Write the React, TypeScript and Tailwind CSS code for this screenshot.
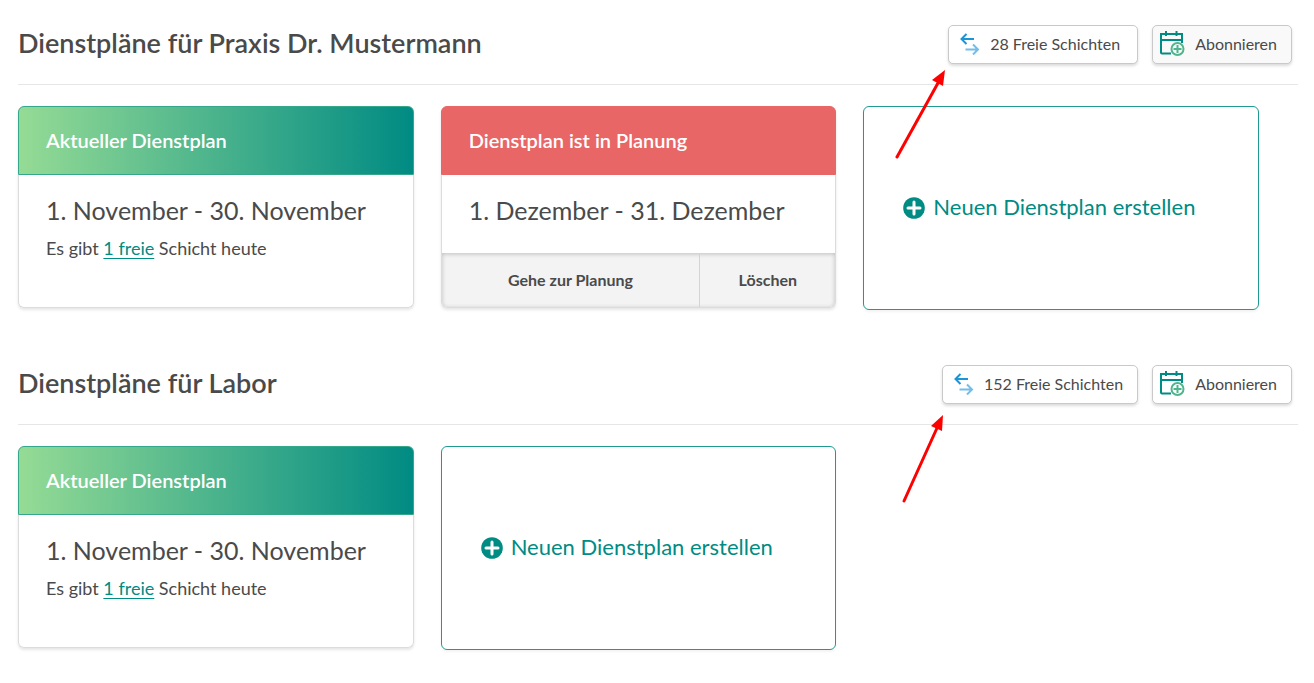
import type { ReactNode } from "react";
import { clsx } from "clsx";

type Point = [number, number];

type Pointer = {
  tail: Point;
  shaftEnd: Point;
  head: string;
};

const SwapIcon = () => (
  <svg width="20" height="22" viewBox="0 0 20 22" fill="none" strokeWidth="2" aria-hidden="true">
    <path d="M6.500 1 1.500 6l5 5M2 6h12" stroke="#1b94d8" />
    <path d="M13 11.500l5 5-5 5M18 16.500H5.500" stroke="#72bdea" />
  </svg>
);

const CalendarIcon = () => (
  <svg width="26" height="26" viewBox="0 0 26 26" fill="none" aria-hidden="true">
    <path d="M12 22.500H3a1 1 0 0 1-1-1V3h21v9M2 9h21M7 0v5M17.500 0v5" stroke="#008b83" strokeWidth="2" />
    <circle cx="18.500" cy="18" r="6" stroke="#4fb58d" strokeWidth="2" />
    <path d="M18.500 14v8M14.500 18h8" stroke="#4fb58d" strokeWidth="2" />
  </svg>
);

const PlusIcon = () => (
  <svg width="22" height="22" viewBox="0 0 22 22" aria-hidden="true">
    <circle cx="11" cy="11" r="10.800" fill="#008b83" />
    <path d="M11 5v12M5 11h12" stroke="#fff" strokeWidth="3" strokeLinecap="round" />
  </svg>
);

const PointerArrow = ({ tail, shaftEnd, head }: Pointer) => (
  <svg
    className="pointer-events-none absolute top-full -left-[60px] z-10"
    width="70"
    height="100"
    viewBox="0 0 70 100"
    aria-hidden="true"
  >
    <path
      d={`M${tail.join(" ")}L${shaftEnd.join(" ")}`}
      stroke="#ff0000"
      strokeWidth="3"
      strokeLinecap="round"
    />
    <polygon points={head} fill="#ff0000" />
  </svg>
);

const ToolbarButton = ({
  icon,
  children,
  className,
}: {
  icon: ReactNode;
  children: ReactNode;
  className?: string;
}) => (
  <button
    type="button"
    className={clsx(
      "flex h-[39px] items-center rounded-[5px] border border-[#c9c9c9] pb-px text-base text-[#4a4a4a] shadow-[0_2px_3px_rgba(0,0,0,0.14)]",
      className,
    )}
  >
    {icon}
    {children}
  </button>
);

const CurrentPlanCard = () => (
  <article className="flex min-h-[202px] flex-col rounded-[6px] shadow-[0_2px_3px_rgba(0,0,0,0.1)]">
    <h2 className="rounded-t-[6px] border border-[#35a88b] bg-linear-to-r/srgb from-[#95db95] to-[#008b83] px-[27px] pt-[19px] pb-5 text-xl leading-7 font-semibold text-white">
      Aktueller Dienstplan
    </h2>
    <div className="flex-1 rounded-b-[6px] border border-t-0 border-[#dcdcdc] px-[27px] pt-[17px]">
      <p className="text-[25px] leading-9">1. November - 30. November</p>
      <p className="mt-2 text-lg leading-6">
        Es gibt{" "}
        <a href="#freie-schichten" className="text-[#008b83] underline underline-offset-3">
          1 freie
        </a>{" "}
        Schicht heute
      </p>
    </div>
  </article>
);

const DraftPlanCard = () => (
  <article className="flex min-h-[202px] flex-col rounded-[6px] shadow-[0_2px_3px_rgba(0,0,0,0.1)]">
    <h2 className="rounded-t-[6px] border border-[#e86666] bg-[#e86666] px-[27px] pt-[19px] pb-5 text-xl leading-7 font-semibold text-white">
      Dienstplan ist in Planung
    </h2>
    <div className="flex flex-1 flex-col rounded-b-[6px] border border-t-0 border-[#dcdcdc]">
      <p className="flex-1 px-[27px] pt-[17px] text-[25px] leading-9">
        1. Dezember - 31. Dezember
      </p>
      <div className="flex h-[54px] rounded-b-[5px] bg-[#f3f3f3] text-base font-bold shadow-[inset_0_1px_4px_rgba(0,0,0,0.22)]">
        <button type="button" className="flex-1 border-r border-[#d4d4d4] pb-px">
          Gehe zur Planung
        </button>
        <button type="button" className="w-[135px] pb-px">
          Löschen
        </button>
      </div>
    </div>
  </article>
);

const NewPlanCard = () => (
  <button
    type="button"
    className="flex min-h-[204px] items-center gap-2 rounded-[6px] border border-[#1f9a92] px-[39px] text-left text-[22px] leading-7 text-[#008b83] shadow-[0_2px_3px_rgba(0,0,0,0.05)]"
  >
    <PlusIcon />
    <span className="pb-[3px]">Neuen Dienstplan erstellen</span>
  </button>
);

const PlanSection = ({
  title,
  openShifts,
  pointer,
  highlighted,
  children,
}: {
  title: string;
  openShifts: number;
  pointer: Pointer;
  highlighted?: boolean;
  children: ReactNode;
}) => (
  <section>
    <header className="flex items-start justify-between border-b border-[#e6e6e6] pr-[6px] pb-5">
      <h1 className="text-[27px] leading-9 font-semibold">{title}</h1>
      <div className="flex gap-[14px]">
        <div className="relative">
          <ToolbarButton
            icon={<SwapIcon />}
            className="min-w-[190px] gap-[10px] bg-white pr-[14px] pl-[11px]"
          >
            {openShifts} Freie Schichten
          </ToolbarButton>
          <PointerArrow {...pointer} />
        </div>
        <ToolbarButton
          icon={<CalendarIcon />}
          className={clsx("gap-[10px] pr-[14px] pl-[6px]", highlighted ? "bg-[#f9f9f9]" : "bg-white")}
        >
          Abonnieren
        </ToolbarButton>
      </div>
    </header>
    <div className="mt-[21px] grid grid-cols-3 items-start gap-[27px] pr-[39px]">{children}</div>
  </section>
);

export default function App() {
  return (
    <main className="flex flex-col gap-[55px] bg-white pt-[25px] pr-4 pb-8 pl-[18px] font-['Lato',sans-serif] text-[#4a4a4a]">
      <PlanSection
        title="Dienstpläne für Praxis Dr. Mustermann"
        openShifts={28}
        pointer={{ tail: [9, 93], shaftEnd: [50, 19], head: "57,6 44,16 55,22" }}
        highlighted
      >
        <CurrentPlanCard />
        <DraftPlanCard />
        <NewPlanCard />
      </PlanSection>
      <PlanSection
        title="Dienstpläne für Labor"
        openShifts={152}
        pointer={{ tail: [22, 97], shaftEnd: [55, 24], head: "61,11 49,22 60,27" }}
      >
        <CurrentPlanCard />
        <NewPlanCard />
      </PlanSection>
    </main>
  );
}
